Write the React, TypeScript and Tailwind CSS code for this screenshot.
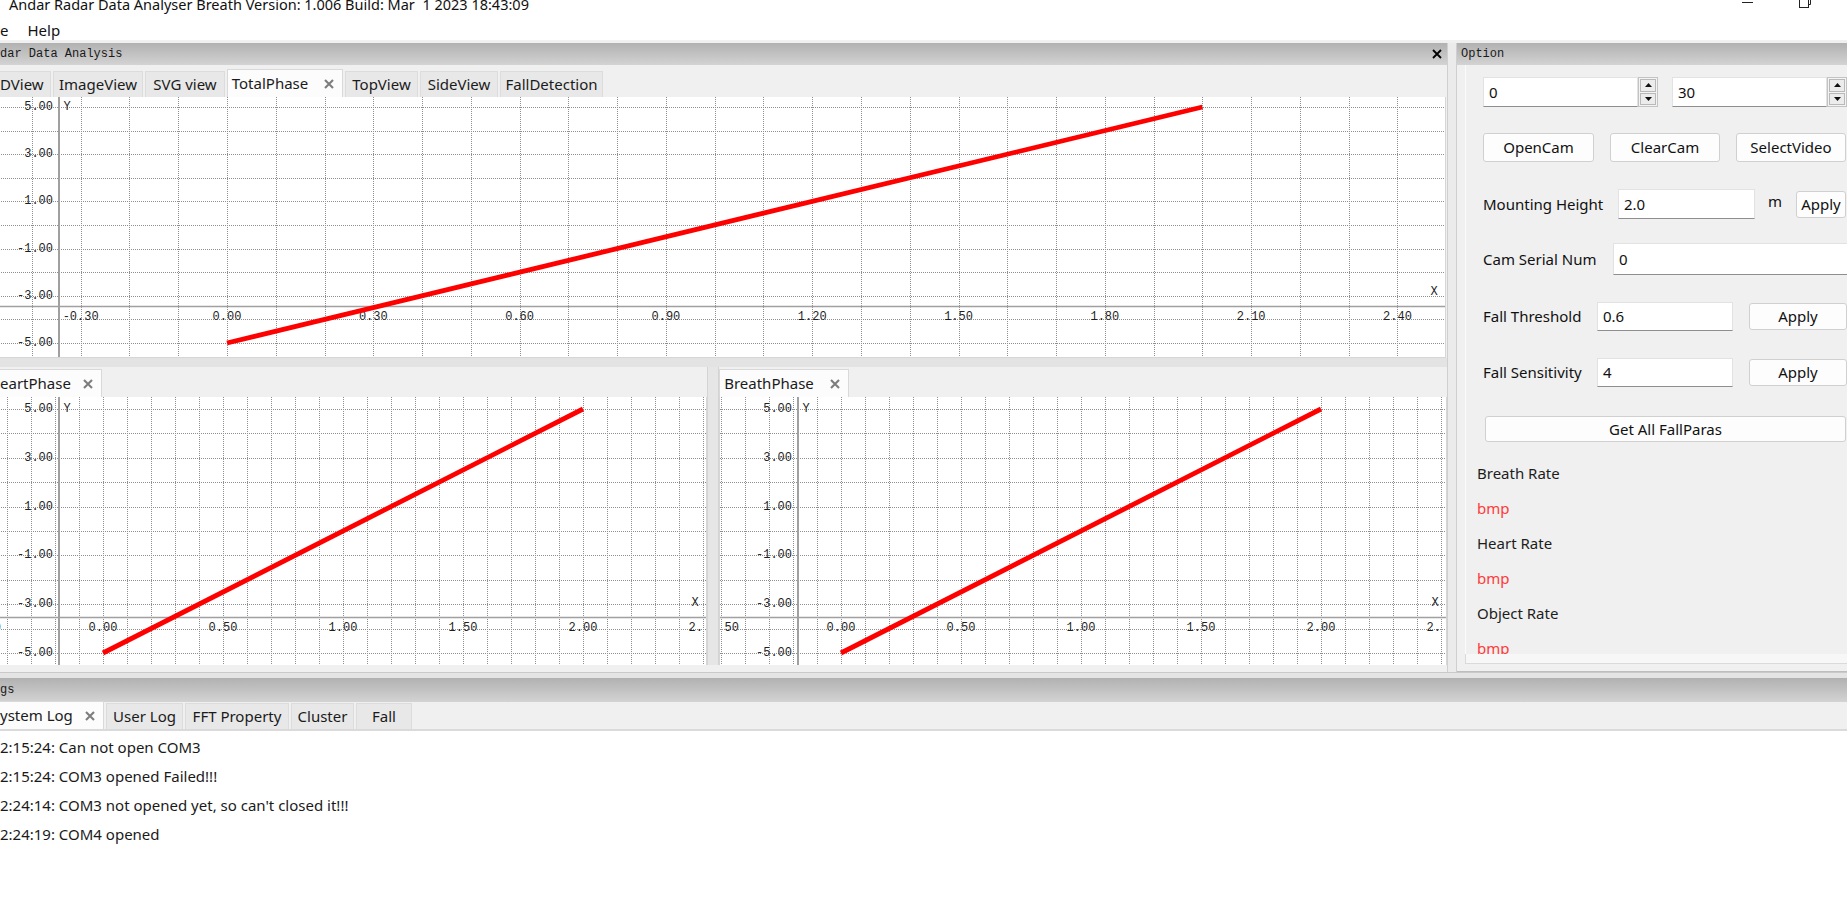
import { useId } from "react";
import clsx from "clsx";

const mono = "font-['Liberation_Mono',monospace]";

type TabDef = {
  label: string;
  w: string;
  active?: boolean;
  closable?: boolean;
  flush?: boolean;
};

function CloseGlyph({ className, weight = 2.1 }: { className?: string; weight?: number }) {
  return (
    <svg width="10" height="10" viewBox="0 0 10 10" className={clsx("shrink-0", className)}>
      <path d="M1 1L9 9M9 1L1 9" stroke="currentColor" strokeWidth={weight} />
    </svg>
  );
}

function TabStrip({ tabs, h, className }: { tabs: TabDef[]; h: string; className?: string }) {
  return (
    <div className={clsx("flex shrink-0 items-end gap-[2px] bg-[#f0f0f0]", h, className)}>
      {tabs.map((t) => (
        <div
          key={t.label}
          className={clsx(
            "flex shrink-0 items-center whitespace-nowrap border border-b-0 leading-none text-[#1b1b1b]",
            t.w,
            t.active ? "h-[28px] border-[#d9d9d9] bg-[#fcfcfc]" : "h-[26px] border-[#dcdcdc] bg-[#e8e8e8]",
            t.flush && "border-l-0",
            t.closable && "pr-[8px]",
          )}
        >
          <span className={clsx("flex-1", t.flush ? "text-left" : "text-center")}>{t.label}</span>
          {t.closable && <CloseGlyph className="ml-[12px] text-[#7d7d7d]" />}
        </div>
      ))}
    </div>
  );
}

function DockTitle({ label, closable, h = "h-[22px]" }: { label: string; closable?: boolean; h?: string }) {
  return (
    <div
      className={clsx(
        "flex shrink-0 items-center justify-between bg-gradient-to-b from-[#b1b1b1] to-[#d3d3d3] text-[12px] text-[#1a1a1a]",
        mono,
        h,
      )}
    >
      <span className="whitespace-nowrap">{label}</span>
      {closable && <CloseGlyph className="mr-[5px] text-black" weight={1.8} />}
    </div>
  );
}

type ChartProps = {
  w: number;
  h: number;
  x0: number;
  ux: number;
  y0: number;
  uy: number;
  axisX: number;
  axisY: number;
  every: number;
};

// phase plot: dotted grid every 0.1 / 1.0, axis labels every `every` grid columns
function PhaseChart({ w, h, x0, ux, y0, uy, axisX, axisY, every }: ChartProps) {
  const clip = useId();
  const step = ux / 10;
  const cols: number[] = [];
  for (let k = Math.ceil(-x0 / step); k <= Math.floor((w - x0) / step); k++) cols.push(k);
  const rows: number[] = [];
  for (let j = -8; j <= 8; j++) {
    const y = y0 - j * uy;
    if (y >= 0 && y <= h) rows.push(j);
  }
  const px = (v: number) => x0 + v * ux;
  const py = (v: number) => y0 - v * uy;
  const label = { fontFamily: "Liberation Mono, monospace", fontSize: 12, fill: "#1f1f1f" };

  return (
    <svg width={w} height={h} className="block shrink-0 bg-white">
      <defs>
        <clipPath id={clip}>
          <rect x={5} y={0} width={w - 10} height={h} />
        </clipPath>
      </defs>
      {cols.map((k) => {
        const x = Math.round(x0 + k * step) + 0.5;
        return <line key={`c${k}`} x1={x} x2={x} y1={0} y2={h} stroke="#8e8e8e" strokeDasharray="1 1" />;
      })}
      {rows.map((j) => {
        const y = Math.round(py(j)) + 0.5;
        return <line key={`r${j}`} x1={0} x2={w} y1={y} y2={y} stroke="#8e8e8e" strokeDasharray="1 1" />;
      })}
      <line x1={axisX} x2={axisX} y1={0} y2={h} stroke="#a0a0a0" strokeWidth={2} />
      <line x1={0} x2={w} y1={axisY + 0.5} y2={axisY + 0.5} stroke="#a0a0a0" strokeWidth={1.5} />
      {[-5, -3, -1, 1, 3, 5].map((j) => (
        <text key={`yl${j}`} x={axisX - 6} y={py(j)} textAnchor="end" dominantBaseline="central" {...label}>
          {j.toFixed(2)}
        </text>
      ))}
      <g clipPath={`url(#${clip})`}>
        {cols
          .filter((k) => k % every === 0)
          .map((k) => (
            <text key={`xl${k}`} x={px(k / 10)} y={axisY + 11} textAnchor="middle" dominantBaseline="central" {...label}>
              {(k / 10).toFixed(2)}
            </text>
          ))}
      </g>
      <text x={axisX + 8} y={py(5)} textAnchor="middle" dominantBaseline="central" {...label}>
        Y
      </text>
      <text x={w - 11} y={axisY - 14} textAnchor="middle" dominantBaseline="central" {...label}>
        X
      </text>
      <line x1={px(0)} y1={py(-5)} x2={px(2)} y2={py(5)} stroke="#ff0000" strokeWidth={4.8} />
    </svg>
  );
}

function Field({ value, w, h = "h-[30px]" }: { value: string; w: string; h?: string }) {
  return (
    <div
      className={clsx(
        "flex shrink-0 items-center border border-[#e2e2e2] border-b-[#8e8e8e] bg-white pl-[5px] text-[#111]",
        w,
        h,
      )}
    >
      {value}
    </div>
  );
}

function SpinBox({ value, w }: { value: string; w: string }) {
  return (
    <div className={clsx("flex h-[30px] shrink-0", w)}>
      <Field value={value} w="flex-1" />
      <div className="flex w-[20px] shrink-0 flex-col border border-[#c3c3c3] bg-[#f4f4f4] p-[1px]">
        <div className="flex flex-1 items-center justify-center border border-[#b9b9b9] bg-[#ececec]">
          <svg width="7" height="4" viewBox="0 0 7 4">
            <path d="M0 4L3.5 0L7 4Z" fill="#111" />
          </svg>
        </div>
        <div className="mt-[1px] flex flex-1 items-center justify-center border border-[#b9b9b9] bg-[#ececec]">
          <svg width="7" height="4" viewBox="0 0 7 4">
            <path d="M0 0L3.5 4L7 0Z" fill="#111" />
          </svg>
        </div>
      </div>
    </div>
  );
}

function Btn({ children, w, h = "h-[29px]", className }: { children: string; w: string; h?: string; className?: string }) {
  return (
    <button
      type="button"
      className={clsx(
        "flex shrink-0 items-center justify-center rounded-[3px] border border-[#d0d0d0] bg-[#fdfdfd] text-[#111]",
        w,
        h,
        className,
      )}
    >
      {children}
    </button>
  );
}

function OptionDock() {
  return (
    <div className="flex w-[395px] shrink-0 flex-col pt-[3px]">
      <div className="flex h-[22px] shrink-0 items-center bg-gradient-to-b from-[#b1b1b1] to-[#d3d3d3] pl-[4px]">
        <span className={clsx("text-[12px] text-[#1a1a1a]", mono)}>Option</span>
      </div>
      <div className="flex h-[607px] flex-col border-b border-[#bdbdbd] bg-[#f0f0f0]">
        <div className="ml-[8px] h-[589px] overflow-hidden border-l border-[#fbfbfb] text-[15px]">
          <div className="flex flex-col pl-[17px] pt-[12px]">
            <div className="flex items-center gap-[14px]">
              <SpinBox value="0" w="w-[175px]" />
              <SpinBox value="30" w="w-[175px]" />
            </div>
            <div className="mt-[26px] flex gap-[16px]">
              <Btn w="w-[111px]">OpenCam</Btn>
              <Btn w="w-[110px]">ClearCam</Btn>
              <Btn w="w-[110px]">SelectVideo</Btn>
            </div>
            <div className="mt-[27px] flex h-[30px] items-center">
              <span className="w-[135px] shrink-0 whitespace-nowrap">Mounting Height</span>
              <Field value="2.0" w="w-[137px]" />
              <span className="ml-[13px] w-[28px] shrink-0 -translate-y-[3px]">m</span>
              <Btn w="w-[50px]" h="h-[27px]">Apply</Btn>
            </div>
            <div className="mt-[24px] flex h-[32px] items-center">
              <span className="w-[130px] shrink-0 whitespace-nowrap">Cam Serial Num</span>
              <Field value="0" w="w-[250px]" h="h-[32px]" />
            </div>
            <div className="mt-[27px] flex h-[29px] items-center">
              <span className="w-[114px] shrink-0 whitespace-nowrap">Fall Threshold</span>
              <Field value="0.6" w="w-[136px]" h="h-[29px]" />
              <Btn w="w-[98px]" h="h-[27px]" className="ml-[16px]">Apply</Btn>
            </div>
            <div className="mt-[27px] flex h-[29px] items-center">
              <span className="w-[114px] shrink-0 whitespace-nowrap">Fall Sensitivity</span>
              <Field value="4" w="w-[136px]" h="h-[29px]" />
              <Btn w="w-[98px]" h="h-[27px]" className="ml-[16px]">Apply</Btn>
            </div>
            <Btn w="w-[361px]" h="h-[26px]" className="ml-[2px] mt-[29px]">Get All FallParas</Btn>
          </div>
          <div className="mt-[21px] flex flex-col gap-[15px] pl-[11px] leading-[20px]">
            <span className="text-[#1d1d1d]">Breath Rate</span>
            <span className="text-[#ff3a3a]">bmp</span>
            <span className="text-[#1d1d1d]">Heart Rate</span>
            <span className="text-[#ff3a3a]">bmp</span>
            <span className="text-[#1d1d1d]">Object Rate</span>
            <span className="text-[#ff3a3a]">bmp</span>
          </div>
        </div>
        <div className="ml-[8px] h-[10px] border-b border-l border-[#dadada] bg-[#f7f7f7]" />
      </div>
    </div>
  );
}

function RadarDock() {
  const topTabs: TabDef[] = [
    { label: "DView", w: "w-[51px]", flush: true },
    { label: "ImageView", w: "w-[90px]" },
    { label: "SVG view", w: "w-[80px]" },
    { label: "TotalPhase", w: "w-[116px]", active: true, closable: true },
    { label: "TopView", w: "w-[73px]" },
    { label: "SideView", w: "w-[78px]" },
    { label: "FallDetection", w: "w-[103px]" },
  ];

  return (
    <div className="flex w-[1447px] shrink-0 flex-col pt-[3px]">
      <DockTitle label="dar Data Analysis" closable />
      <TabStrip tabs={topTabs} h="h-[32px]" className="text-[15px]" />
      <div className="w-[1446px] overflow-hidden border-b border-r border-[#d6d6d6]">
        <div className="-ml-[19px]">
          <PhaseChart w={1464} h={260} x0={246} ux={487.7} y0={128} uy={23.6} axisX={78} axisY={209} every={3} />
        </div>
      </div>
      <div className="h-[9px] shrink-0 bg-[#e3e3e3]" />
      <div className="flex">
        <div className="flex w-[707px] shrink-0 flex-col">
          <TabStrip
            tabs={[{ label: "eartPhase", w: "w-[102px]", active: true, closable: true, flush: true }]}
            h="h-[30px]"
            className="text-[15px]"
          />
          <div className="overflow-hidden border-r border-[#d6d6d6]">
            <div className="-ml-[19px]">
              <PhaseChart w={725} h={268} x0={122} ux={240} y0={134} uy={24.4} axisX={78} axisY={220} every={5} />
            </div>
          </div>
        </div>
        <div className="w-[12px] shrink-0 border-x border-[#d4d4d4] bg-[#e6e6e6]" />
        <div className="flex w-[728px] shrink-0 flex-col">
          <TabStrip
            tabs={[{ label: "BreathPhase", w: "w-[130px]", active: true, closable: true }]}
            h="h-[30px]"
            className="text-[15px]"
          />
          <div className="border-x border-[#d6d6d6]">
            <PhaseChart w={726} h={268} x0={121} ux={240} y0={134} uy={24.4} axisX={78} axisY={220} every={5} />
          </div>
        </div>
      </div>
    </div>
  );
}

const logLines = [
  "2:15:24: Can not open COM3",
  "2:15:24: COM3 opened Failed!!!",
  "2:24:14: COM3 not opened yet, so can't closed it!!!",
  "2:24:19: COM4 opened",
];

function LogsDock() {
  const tabs: TabDef[] = [
    { label: "ystem Log", w: "w-[104px]", active: true, closable: true, flush: true },
    { label: "User Log", w: "w-[77px]" },
    { label: "FFT Property", w: "w-[104px]" },
    { label: "Cluster", w: "w-[63px]" },
    { label: "Fall", w: "w-[56px]" },
  ];
  return (
    <div className="flex flex-1 flex-col">
      <div className="h-[6px] shrink-0 border-t border-[#c9c9c9] bg-[#e4e4e4]" />
      <DockTitle label="gs" h="h-[24px]" />
      <TabStrip tabs={tabs} h="h-[29px]" className="border-b-2 border-[#dadada] text-[15px]" />
      <div className="flex flex-1 flex-col bg-white pt-[2px] text-[15px] leading-[29px] text-[#1a1a1a]">
        {logLines.map((l) => (
          <div key={l} className="whitespace-nowrap">
            {l}
          </div>
        ))}
      </div>
    </div>
  );
}

export default function App() {
  return (
    <div className="flex h-[917px] w-[1847px] flex-col overflow-hidden bg-white font-['Noto_Sans',sans-serif] text-[15px] text-[#111]">
      <div className="flex h-[20px] shrink-0 items-start">
        <div className="-mt-[6px] whitespace-nowrap pl-[9px] text-[14.5px] leading-[20px] text-[#111]">
          Andar Radar Data Analyser Breath Version: 1.006 Build: Mar&nbsp;&nbsp;1 2023 18:43:09
        </div>
        <div className="ml-auto mt-[2px] h-[1px] w-[11px] bg-[#222]" />
        <svg width="13" height="12" viewBox="0 0 13 12" className="-mt-[4px] ml-[46px] mr-[35px]">
          <path d="M3.5 2.5V0.5H11.5V8.5H9.5" fill="none" stroke="#222" />
          <rect x="0.5" y="2.5" width="9" height="9" fill="none" stroke="#222" />
        </svg>
      </div>
      <div className="flex h-[20px] shrink-0 items-center gap-[19px] text-[15px] leading-[20px]">
        <span>e</span>
        <span>Help</span>
      </div>
      <div className="flex h-[632px] shrink-0 bg-[#f0f0f0]">
        <RadarDock />
        <div className="mt-[3px] w-[10px] shrink-0 border-x border-[#cfcfcf] bg-[#ebebeb]" />
        <OptionDock />
      </div>
      <LogsDock />
    </div>
  );
}
